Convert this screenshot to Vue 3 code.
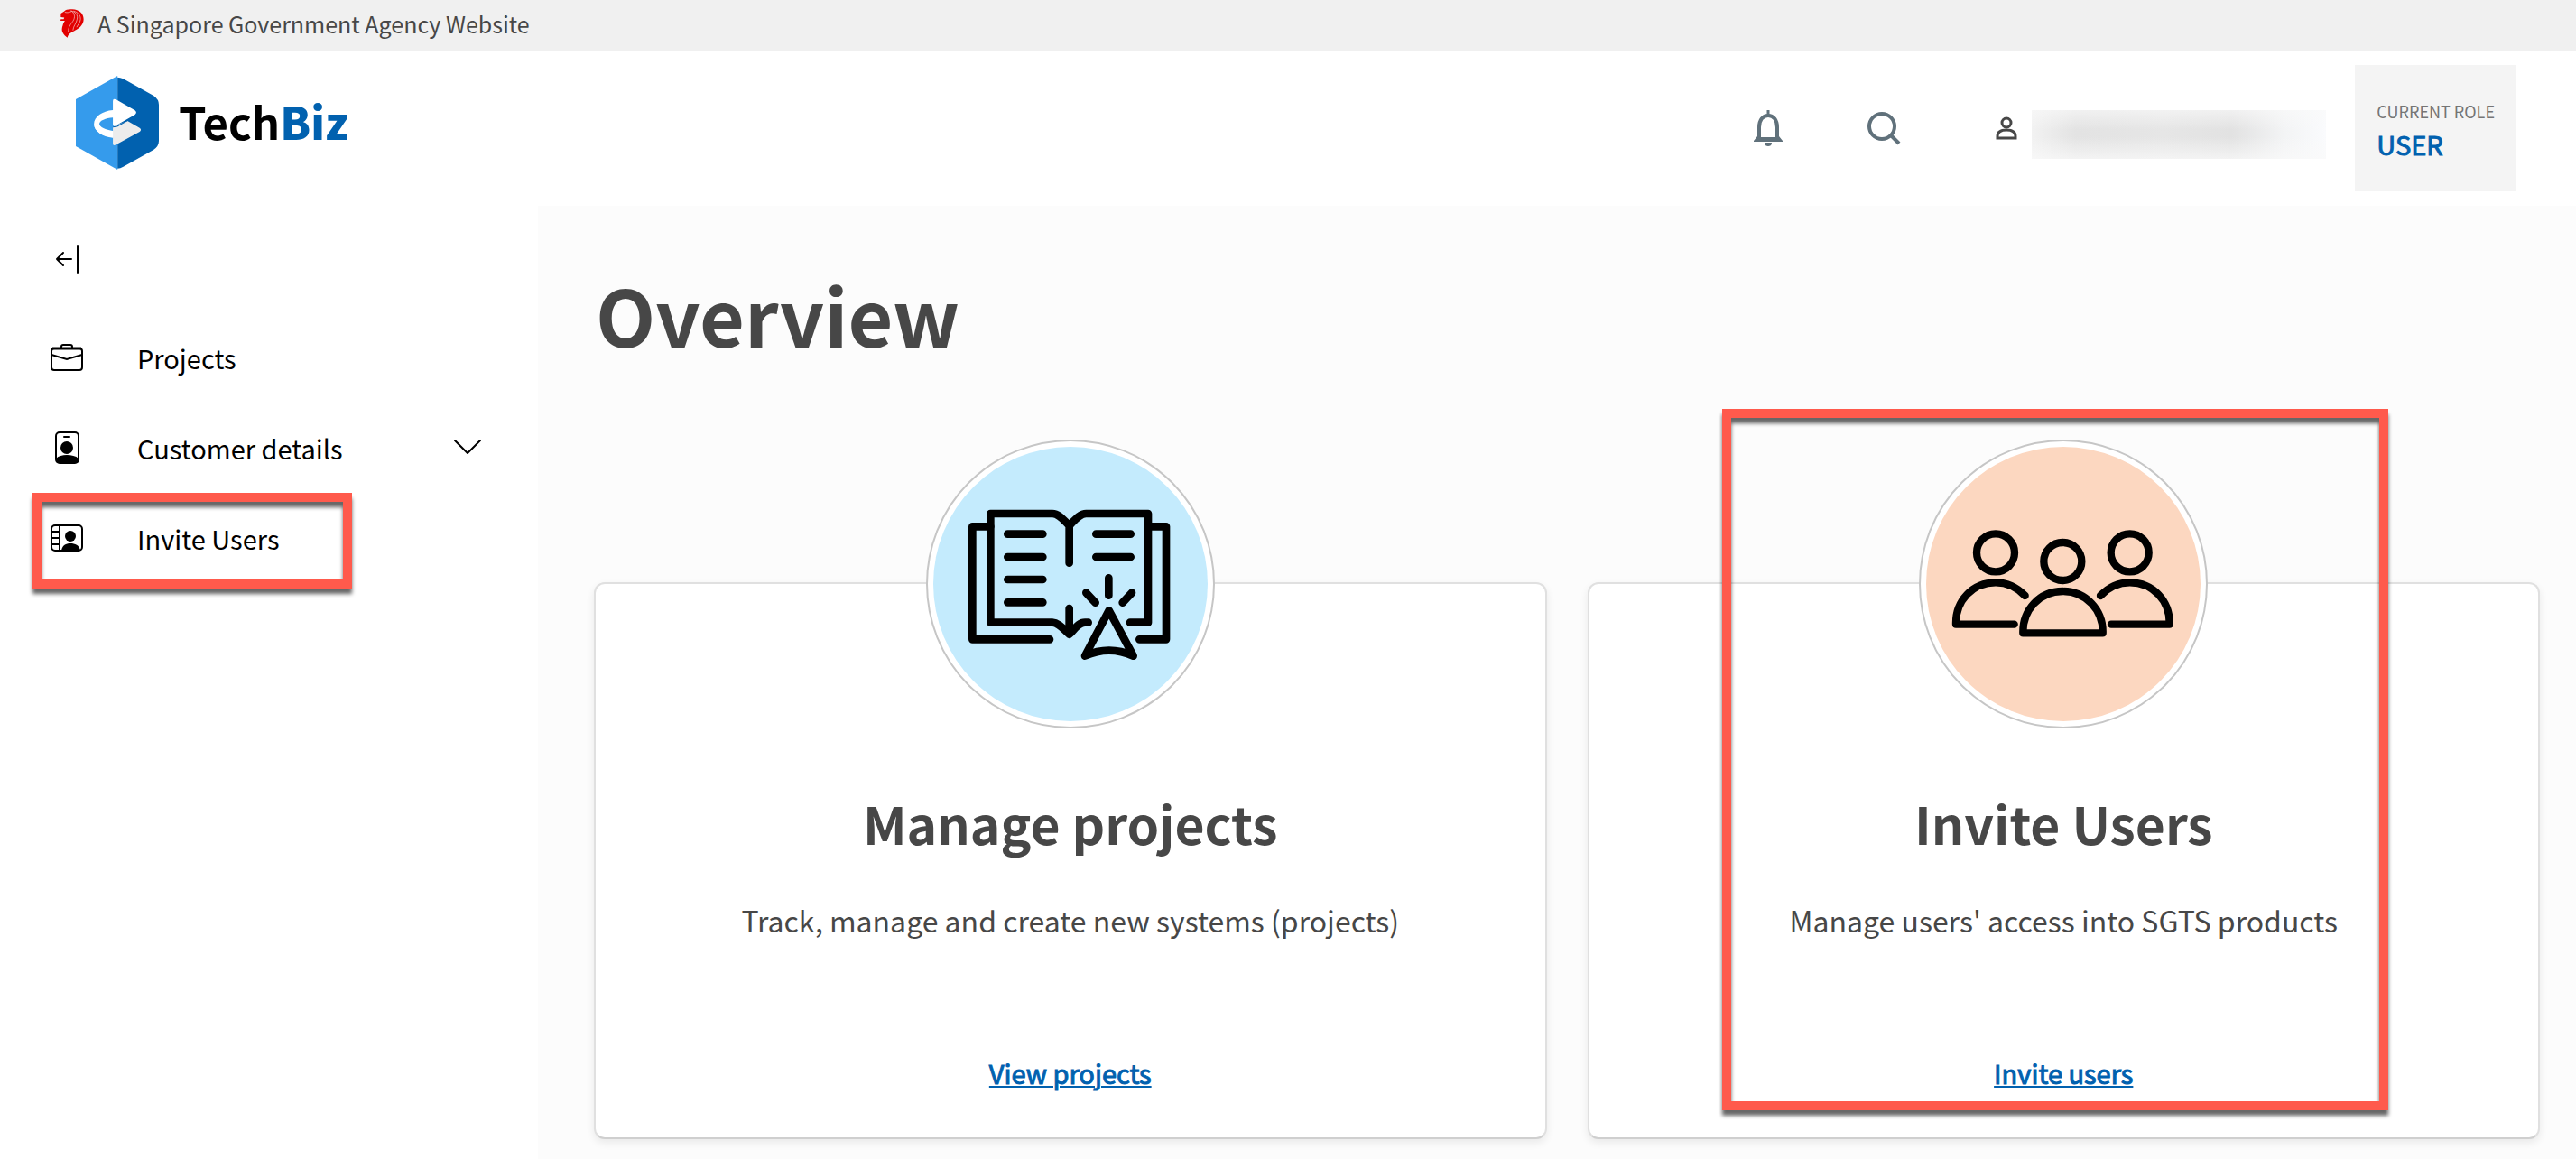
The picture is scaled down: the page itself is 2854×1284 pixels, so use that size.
<script setup>
const cards = [
  { id: 'projects', title: 'Manage projects', text: 'Track, manage and create new systems (projects)', link: 'View projects' },
  { id: 'users', title: 'Invite Users', text: "Manage users' access into SGTS products", link: 'Invite users' },
]
</script>

<template>
  <div class="page">
    <div class="masthead">
      <svg class="lion" viewBox="51 32 81 100" aria-hidden="true">
        <path fill="#e20000" d="M52 48 64 40C68 34 80 32 92 33 116 34 131 48 131 67 131 84 120 95 107 103 96 110 77 116 75 131 68 126 62 121 59 114 54 106 56 96 59 88 60 82 64 77 66 73L51 73 52 67 62 67 64 62 52 60z" />
        <path fill="none" stroke="#f6dcdc" stroke-width="2" d="M66 43c10 3 16 0 24-3 10 8 13 20 4 34-9 13-17 22-16 37M86 38c17 3 27 15 22 31-3 15-12 20-14 37M96 39c16 4 25 15 24 29-1 12-9 18-13 27" />
      </svg>
      <span>A Singapore Government Agency Website</span>
    </div>

    <header class="header">
      <a class="brand" href="#" aria-label="TechBiz">
        <svg class="brand-mark" viewBox="212 252 233 312" preserveAspectRatio="none" aria-hidden="true">
          <path fill="#359bec" d="M329 252 212 330V486L329 564z" />
          <path fill="#0161af" d="M329 257q8 0 16 5L430 318q15 12 15 30V468q0 18-15 30L345 554q-8 6-16 6z" />
          <path fill="#ececec" d="M316 421 357 402 391 425q7 6 0 13L325 481q-9 5-9-3V457C288 452 263 438 263 411c7 12 25 22 53 25z" />
          <path fill="#fff" d="M316 336q0-10 9-5L378 367q7 7 0 14L324 418q-8 3-8-4V391c-20 2-38 10-38 21s18 20 38 23V458c-30-3-53-22-53-46s23-43 53-46z" />
          <path fill="none" stroke="#0161af" stroke-width="3" d="M316 422 328 420 357 401" />
        </svg>
        <span>Tech<b>Biz</b></span>
      </a>
      <div class="tools">
        <button class="tool bell" type="button" aria-label="Notifications">
          <svg width="32" height="40" viewBox="0 0 32 40" fill="none" stroke="#60717b" stroke-width="4">
            <path d="M16 0v6" stroke-width="3" />
            <path d="M6 32V19C6 11 10 6 16 6s10 5 10 13v13" />
            <path d="M0 34 4 29h24l4 5v1H0zM12 36h8c0 3-2 4-4 4s-4-1-4-4z" fill="#60717b" stroke="none" />
            <path d="M8 20v10h16V20z" fill="#fff" stroke="none" />
          </svg>
        </button>
        <button class="tool search" type="button" aria-label="Search">
          <svg width="38" height="38" viewBox="0 0 38 38" fill="none" stroke="#60717b" stroke-width="4">
            <circle cx="17" cy="17" r="14" /><path d="M27 27 36 36" />
          </svg>
        </button>
        <div class="account">
          <svg width="24" height="26" viewBox="0 0 24 26" fill="none" stroke="#474747" stroke-width="3">
            <circle cx="12" cy="7" r="5" /><path d="M2 24v-2c0-5 4-7 10-7s10 2 10 7v2z" />
          </svg>
          <span class="masked"></span>
        </div>
        <div class="role">
          <span class="role-label">CURRENT ROLE</span>
          <span class="role-name">USER</span>
        </div>
      </div>
    </header>

    <div class="body">
      <aside class="sidebar">
        <button class="collapse" type="button" aria-label="Collapse menu">
          <svg width="28" height="32" viewBox="0 0 28 32" fill="none" stroke="#000" stroke-width="2" stroke-linecap="round" stroke-linejoin="round">
            <path d="M18 16H2M9 9 2 16l7 7M25 1v30" />
          </svg>
        </button>
        <nav>
          <a class="item" href="#">
            <svg width="36" height="36" viewBox="0 0 36 36" fill="none" stroke="#000" stroke-width="2">
              <rect x="1" y="8" width="34" height="24" rx="3" />
              <path d="M12 8V6q0-2 2-2h8q2 0 2 2v2M1 15l17 5 17-5" /><path d="M2 8h32" stroke-width="3" />
            </svg>
            <span>Projects</span>
          </a>
          <a class="item" href="#">
            <svg width="36" height="36" viewBox="0 0 36 36" fill="none" stroke="#000" stroke-width="2">
              <rect x="6" y="1" width="25" height="34" rx="4" />
              <path d="M15 6h6" stroke-linecap="round" />
              <circle cx="18" cy="18" r="7" fill="#000" stroke="none" />
              <path d="M6 30c3-3 7-4 12-4s10 1 13 4v2q0 3-3 3H9q-3 0-3-3z" fill="#000" stroke="none" />
            </svg>
            <span>Customer details</span>
            <svg class="chevron" width="30" height="18" viewBox="0 0 30 18" fill="none" stroke="#000" stroke-width="2" stroke-linecap="round" stroke-linejoin="round">
              <path d="M1 1 15 15 29 1" />
            </svg>
          </a>
          <a class="item" href="#">
            <svg width="36" height="36" viewBox="0 0 36 36" fill="none" stroke="#000" stroke-width="2">
              <rect x="1" y="4" width="34" height="28" rx="4" />
              <path d="M10 4v28M1 11h9M1 18h9M1 25h9" />
              <circle cx="22" cy="16" r="6" fill="#000" stroke="none" />
              <path d="M12 32c1-6 5-8 10-8s10 2 11 8z" fill="#000" stroke="none" />
            </svg>
            <span>Invite Users</span>
            <i class="highlight highlight-item"></i>
          </a>
        </nav>
      </aside>

      <main class="main">
        <h1>Overview</h1>
        <div class="cards">
          <section v-for="card in cards" :key="card.id" class="card">
            <div class="medallion">
              <svg v-if="card.id === 'projects'" viewBox="84 90 948 948" fill="none" stroke="#000" stroke-width="26" stroke-linecap="round" stroke-linejoin="round" aria-hidden="true">
                <circle cx="558" cy="564" r="456" fill="#c4ebfd" stroke="none" />
                <path d="M554 494V370C536 352 520 330 498 330H292V692H498C520 692 538 718 554 731 570 718 582 692 606 692H617M554 370C572 352 588 330 610 330H816V692H756M554 645V731" />
                <path d="M292 373H232V748H489M816 373H876V748H787" />
                <path d="M349 398H466M349 474H466M349 549H466M349 625H466M643 398H758M643 474H758M685 544V602M610 593 641 626M762 593 731 626" />
                <path d="M686 652 606 803Q686 767 767 803z" />
              </svg>
              <svg v-else viewBox="84 90 948 948" fill="none" stroke="#000" stroke-width="25" stroke-linecap="round" stroke-linejoin="round" aria-hidden="true">
                <circle cx="558" cy="564" r="456" fill="#fcd7c0" stroke="none" />
                <circle cx="333" cy="460" r="63" /><circle cx="556" cy="489" r="63" /><circle cx="779" cy="460" r="63" />
                <path d="M395 698H201C199 620 256 559 333 559Q389 559 431 603M717 698H911C913 620 856 559 779 559Q723 559 681 603M424 727H689C691 650 633 588 556 588S422 650 424 727z" />
              </svg>
            </div>
            <h2>{{ card.title }}</h2>
            <p>{{ card.text }}</p>
            <a href="#" class="card-link">{{ card.link }}</a>
            <i v-if="card.id === 'users'" class="highlight highlight-card"></i>
          </section>
        </div>
      </main>
    </div>
  </div>
</template>

<style>
body { margin: 0; background: #fff; }
</style>

<style scoped>
* { box-sizing: border-box; }
.page {
  min-height: 100vh;
  display: flex;
  flex-direction: column;
  font-family: "Noto Sans CJK SC", "Noto Sans", sans-serif;
  color: #474747;
}
button { border: 0; padding: 0; background: none; cursor: pointer; }
svg { display: block; flex: none; }

.masthead {
  display: flex;
  align-items: center;
  gap: 14px;
  height: 56px;
  padding: 0 66px 4px;
  background: #f0f0f0;
  font-size: 25px;
  line-height: 52px;
}
.lion { width: 28px; height: 32px; }

.header {
  display: flex;
  justify-content: space-between;
  align-items: flex-start;
  height: 172px;
  padding: 16px 66px 16px 84px;
}
.brand {
  display: flex;
  gap: 22px;
  margin-top: 12px;
  font-size: 49px;
  line-height: 100px;
  font-weight: 700;
  color: #000;
  text-decoration: none;
}
.brand b { color: #0161af; }
.brand-mark { width: 92px; height: 104px; }
.tools { display: flex; align-items: center; }
.bell { margin-right: 93px; }
.search { margin-right: 105px; }
.account { display: flex; align-items: center; gap: 16px; margin-right: 32px; }
.masked {
  width: 326px;
  height: 54px;
  margin-top: 14px;
  background:
    linear-gradient(180deg, rgba(250, 250, 250, .6), transparent 40%, transparent 55%, rgba(250, 250, 250, .7)),
    linear-gradient(90deg, #f2f2f2, #e3e3e3 15%, #e6e6e6 45%, #e2e2e2 68%, #f3f4f5 86%, #fafbfd);
}
.role {
  display: flex;
  flex-direction: column;
  justify-content: center;
  gap: 6px;
  height: 140px;
  padding: 4px 24px 0;
  background: #f4f4f4;
}
.role-label { font-size: 18px; line-height: 24px; color: #757575; }
.role-name { font-size: 29px; line-height: 36px; color: #0161af; -webkit-text-stroke: 1px #0161af; }

.body { flex: 1; display: grid; grid-template-columns: 596px 1fr; }
.sidebar { padding-top: 43px; }
.collapse { display: block; margin: 0 0 43px 61px; }
.item {
  position: relative;
  display: flex;
  align-items: center;
  gap: 60px;
  height: 100px;
  padding: 0 63px 0 56px;
  font-size: 29px;
  line-height: 40px;
  color: #000;
  text-decoration: none;
}
.chevron { margin-left: auto; }

.highlight {
  position: absolute;
  border: 10px solid #ff5a4c;
  filter: drop-shadow(0 6px 2px rgba(0, 0, 0, .6));
  pointer-events: none;
}
.highlight-item { top: 0; bottom: -6px; left: 36px; width: 354px; }
.highlight-card { top: -194px; bottom: 30px; left: 14%; right: 166px; }

.main { padding: 70px 40px 20px 64px; background: #fcfcfc; }
h1 { margin: 0 0 247px; font-size: 86px; line-height: 100px; font-weight: 700; }
.cards { display: grid; grid-template-columns: 1fr 1fr; gap: 45px; margin-left: -2px; }
.card {
  position: relative;
  display: flex;
  flex-direction: column;
  align-items: center;
  padding: 0 24px 52px;
  border: 2px solid #e0e0e0;
  border-bottom-color: #cfcfcf;
  border-radius: 12px;
  background: #fff;
  box-shadow: 0 4px 10px rgba(0, 0, 0, .08);
  text-align: center;
}
.medallion {
  width: 320px;
  height: 320px;
  margin: -160px 0 64px;
  border: 2px solid #c6c6c6;
  border-radius: 50%;
  background: #fff;
}
h2 { margin: 0 0 44px; font-size: 57px; line-height: 80px; font-weight: 700; }
p { margin: 0 0 125px; font-size: 32px; line-height: 48px; }
.card-link {
  font-size: 29px;
  line-height: 40px;
  color: #0161af;
  -webkit-text-stroke: 1px #0161af;
  text-underline-offset: 2px;
  text-decoration-thickness: 2px;
}
</style>
